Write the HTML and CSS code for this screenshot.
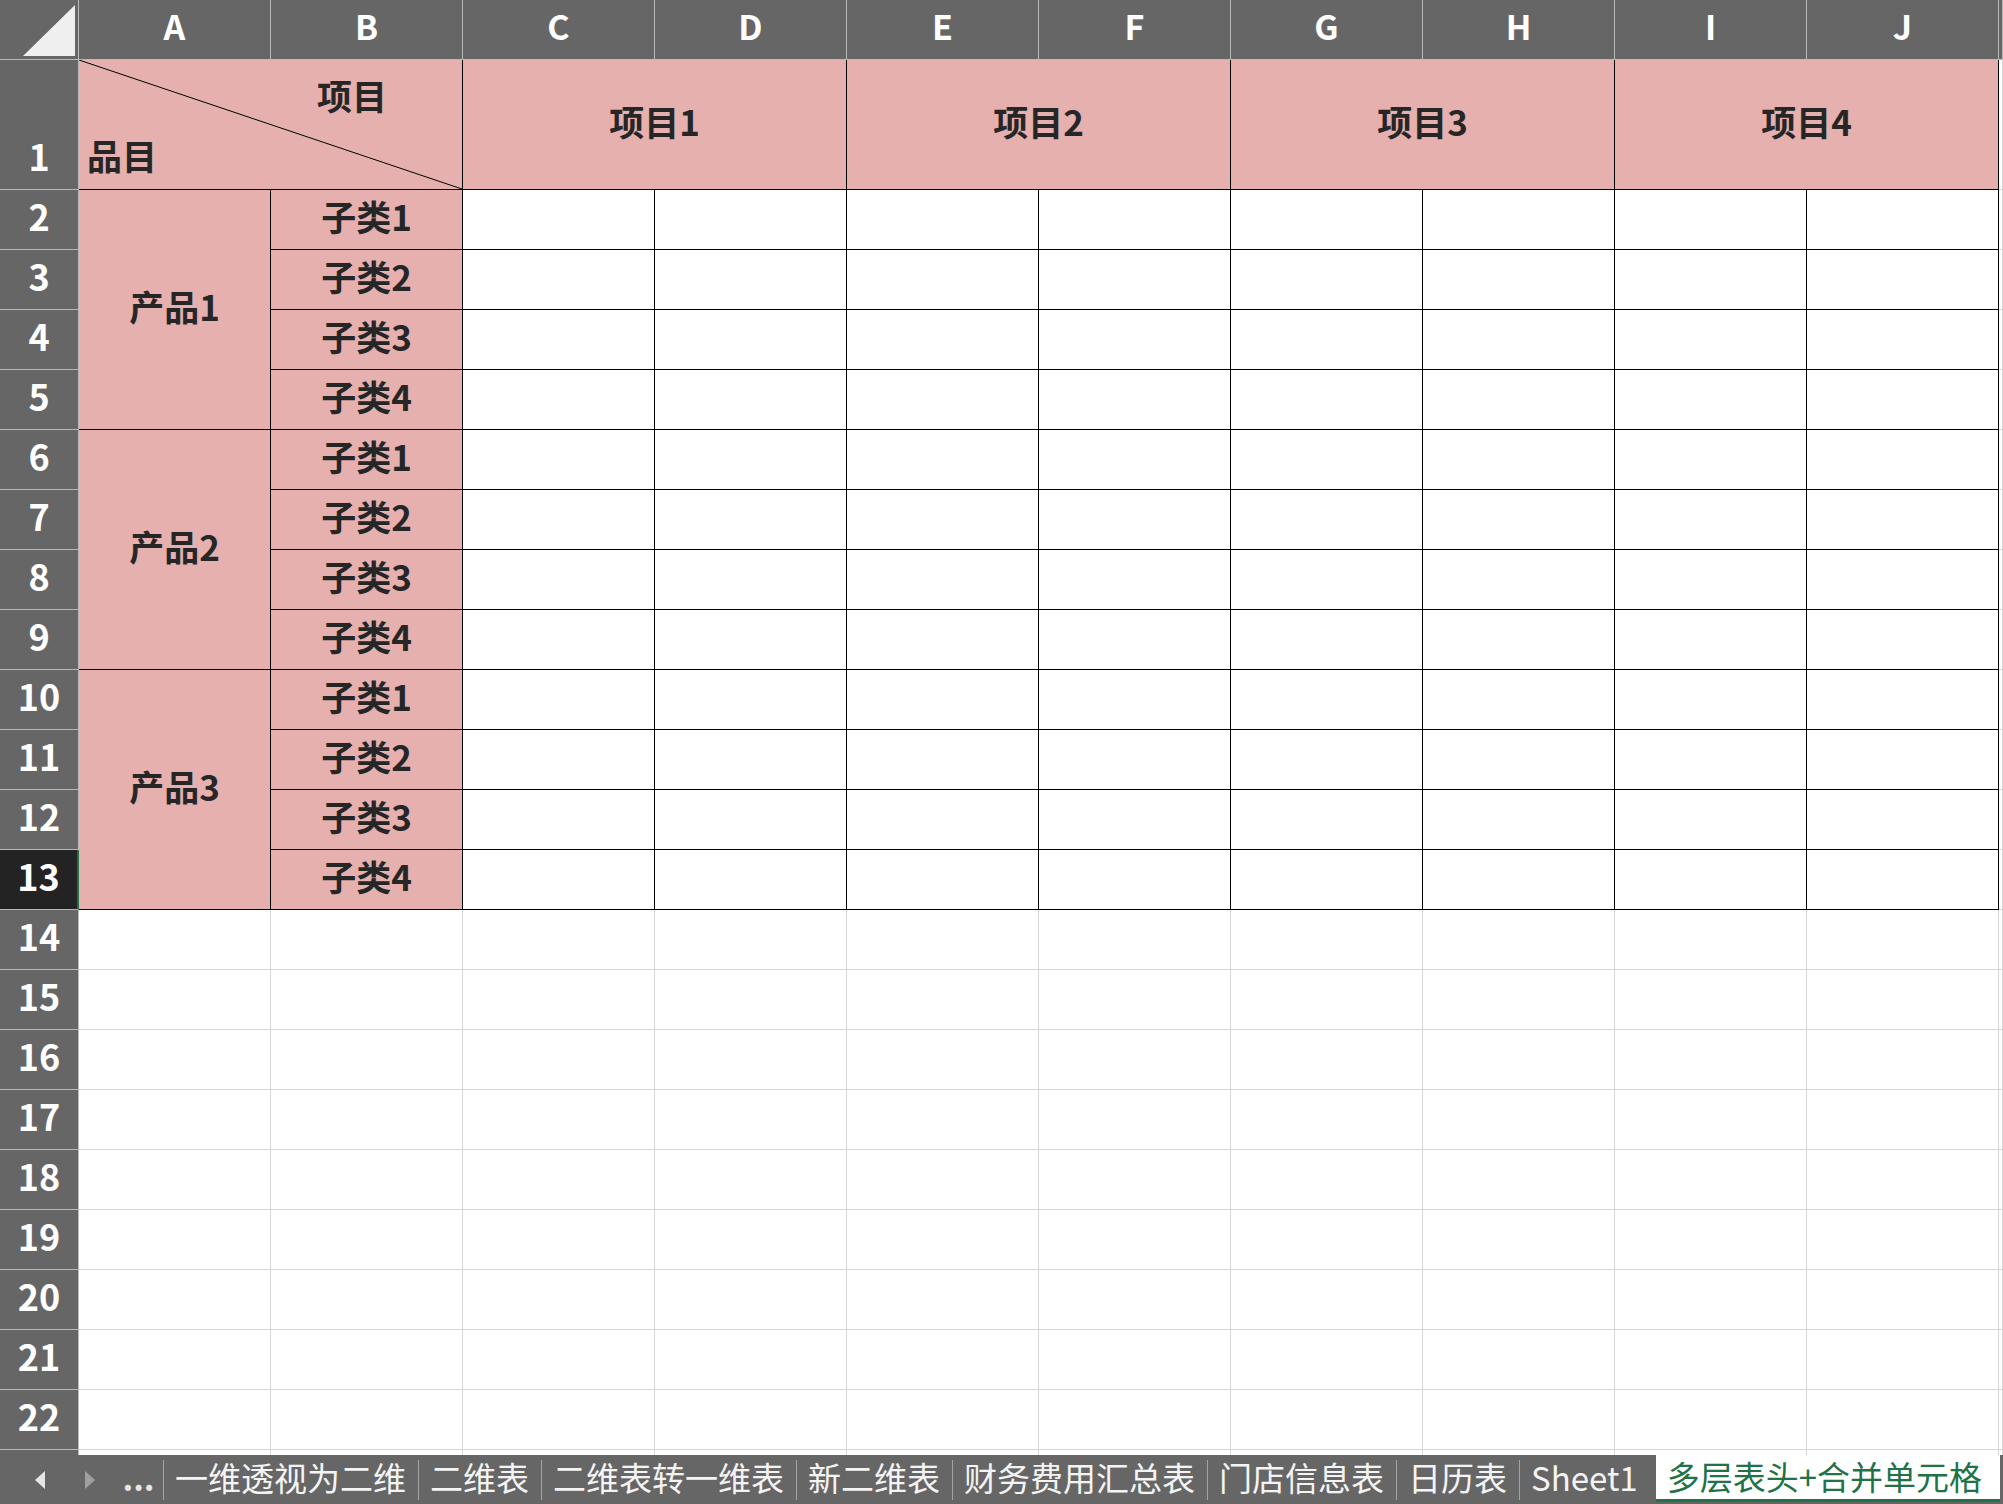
FILE: index.html
```html
<!DOCTYPE html>
<html lang="zh-CN">
<head>
    <meta charset="UTF-8">
    <title>多层表头+合并单元格</title>
    <link rel="stylesheet" href="styles.css">
</head>
<body>
    <!-- Sheet grid -->
    <div class="sheet">
        <!-- Column headers -->
        <div class="hd corner">
            <svg width="78" height="59" viewBox="0 0 78 59"><polygon points="23,56 75,5 75,56" fill="#efefef"/></svg>
        </div>
        <div class="hd">A</div><div class="hd">B</div><div class="hd">C</div><div class="hd">D</div><div class="hd">E</div>
        <div class="hd">F</div><div class="hd">G</div><div class="hd">H</div><div class="hd">I</div><div class="hd">J</div>
        <div class="hd"></div>

        <!-- Row 1: multi-level header -->
        <div class="rh">1</div>
        <div class="t p span2 diag">
            <svg class="slash" preserveAspectRatio="none"><line x1="0" y1="0" x2="100%" y2="100%"/></svg>
            <div class="diag-top">项目</div>
            <div class="diag-bottom">品目</div>
        </div>
        <div class="t p span2">项目1</div>
        <div class="t p span2">项目2</div>
        <div class="t p span2">项目3</div>
        <div class="t p span2">项目4</div>
        <div class="c"></div>

        <!-- 产品1 -->
        <div class="rh">2</div>
        <div class="t p span4">产品1</div>
        <div class="t p">子类1</div>
        <div class="t"></div><div class="t"></div><div class="t"></div><div class="t"></div><div class="t"></div><div class="t"></div><div class="t"></div><div class="t"></div>
        <div class="c"></div>
        <div class="rh">3</div>
        <div class="t p">子类2</div>
        <div class="t"></div><div class="t"></div><div class="t"></div><div class="t"></div><div class="t"></div><div class="t"></div><div class="t"></div><div class="t"></div>
        <div class="c"></div>
        <div class="rh">4</div>
        <div class="t p">子类3</div>
        <div class="t"></div><div class="t"></div><div class="t"></div><div class="t"></div><div class="t"></div><div class="t"></div><div class="t"></div><div class="t"></div>
        <div class="c"></div>
        <div class="rh">5</div>
        <div class="t p">子类4</div>
        <div class="t"></div><div class="t"></div><div class="t"></div><div class="t"></div><div class="t"></div><div class="t"></div><div class="t"></div><div class="t"></div>
        <div class="c"></div>

        <!-- 产品2 -->
        <div class="rh">6</div>
        <div class="t p span4">产品2</div>
        <div class="t p">子类1</div>
        <div class="t"></div><div class="t"></div><div class="t"></div><div class="t"></div><div class="t"></div><div class="t"></div><div class="t"></div><div class="t"></div>
        <div class="c"></div>
        <div class="rh">7</div>
        <div class="t p">子类2</div>
        <div class="t"></div><div class="t"></div><div class="t"></div><div class="t"></div><div class="t"></div><div class="t"></div><div class="t"></div><div class="t"></div>
        <div class="c"></div>
        <div class="rh">8</div>
        <div class="t p">子类3</div>
        <div class="t"></div><div class="t"></div><div class="t"></div><div class="t"></div><div class="t"></div><div class="t"></div><div class="t"></div><div class="t"></div>
        <div class="c"></div>
        <div class="rh">9</div>
        <div class="t p">子类4</div>
        <div class="t"></div><div class="t"></div><div class="t"></div><div class="t"></div><div class="t"></div><div class="t"></div><div class="t"></div><div class="t"></div>
        <div class="c"></div>

        <!-- 产品3 -->
        <div class="rh">10</div>
        <div class="t p span4">产品3</div>
        <div class="t p">子类1</div>
        <div class="t"></div><div class="t"></div><div class="t"></div><div class="t"></div><div class="t"></div><div class="t"></div><div class="t"></div><div class="t"></div>
        <div class="c"></div>
        <div class="rh">11</div>
        <div class="t p">子类2</div>
        <div class="t"></div><div class="t"></div><div class="t"></div><div class="t"></div><div class="t"></div><div class="t"></div><div class="t"></div><div class="t"></div>
        <div class="c"></div>
        <div class="rh">12</div>
        <div class="t p">子类3</div>
        <div class="t"></div><div class="t"></div><div class="t"></div><div class="t"></div><div class="t"></div><div class="t"></div><div class="t"></div><div class="t"></div>
        <div class="c"></div>
        <div class="rh selected">13</div>
        <div class="t p">子类4</div>
        <div class="t"></div><div class="t"></div><div class="t"></div><div class="t"></div><div class="t"></div><div class="t"></div><div class="t"></div><div class="t"></div>
        <div class="c"></div>

        <!-- Empty rows -->
        <div class="rh">14</div>
        <div class="c"></div><div class="c"></div><div class="c"></div><div class="c"></div><div class="c"></div><div class="c"></div><div class="c"></div><div class="c"></div><div class="c"></div><div class="c"></div><div class="c"></div>
        <div class="rh">15</div>
        <div class="c"></div><div class="c"></div><div class="c"></div><div class="c"></div><div class="c"></div><div class="c"></div><div class="c"></div><div class="c"></div><div class="c"></div><div class="c"></div><div class="c"></div>
        <div class="rh">16</div>
        <div class="c"></div><div class="c"></div><div class="c"></div><div class="c"></div><div class="c"></div><div class="c"></div><div class="c"></div><div class="c"></div><div class="c"></div><div class="c"></div><div class="c"></div>
        <div class="rh">17</div>
        <div class="c"></div><div class="c"></div><div class="c"></div><div class="c"></div><div class="c"></div><div class="c"></div><div class="c"></div><div class="c"></div><div class="c"></div><div class="c"></div><div class="c"></div>
        <div class="rh">18</div>
        <div class="c"></div><div class="c"></div><div class="c"></div><div class="c"></div><div class="c"></div><div class="c"></div><div class="c"></div><div class="c"></div><div class="c"></div><div class="c"></div><div class="c"></div>
        <div class="rh">19</div>
        <div class="c"></div><div class="c"></div><div class="c"></div><div class="c"></div><div class="c"></div><div class="c"></div><div class="c"></div><div class="c"></div><div class="c"></div><div class="c"></div><div class="c"></div>
        <div class="rh">20</div>
        <div class="c"></div><div class="c"></div><div class="c"></div><div class="c"></div><div class="c"></div><div class="c"></div><div class="c"></div><div class="c"></div><div class="c"></div><div class="c"></div><div class="c"></div>
        <div class="rh">21</div>
        <div class="c"></div><div class="c"></div><div class="c"></div><div class="c"></div><div class="c"></div><div class="c"></div><div class="c"></div><div class="c"></div><div class="c"></div><div class="c"></div><div class="c"></div>
        <div class="rh">22</div>
        <div class="c"></div><div class="c"></div><div class="c"></div><div class="c"></div><div class="c"></div><div class="c"></div><div class="c"></div><div class="c"></div><div class="c"></div><div class="c"></div><div class="c"></div>
        <div class="rh"></div>
        <div class="c"></div><div class="c"></div><div class="c"></div><div class="c"></div><div class="c"></div><div class="c"></div><div class="c"></div><div class="c"></div><div class="c"></div><div class="c"></div><div class="c"></div>
    </div>

    <!-- Sheet tabs -->
    <div class="tabs">
        <div class="nav">
            <span class="arrow-left"></span>
            <span class="arrow-right"></span>
        </div>
        <div class="more">...</div>
        <div class="tab">一维透视为二维</div>
        <div class="tab">二维表</div>
        <div class="tab">二维表转一维表</div>
        <div class="tab">新二维表</div>
        <div class="tab">财务费用汇总表</div>
        <div class="tab">门店信息表</div>
        <div class="tab">日历表</div>
        <div class="tab">Sheet1</div>
        <div class="tab active">多层表头+合并单元格</div>
    </div>
</body>
</html>
```

FILE: styles.css
```css
* {
    margin: 0;
    padding: 0;
    box-sizing: border-box;
}

body {
    width: 2003px;
    height: 1504px;
    overflow: hidden;
    background: #ffffff;
    font-family: "Noto Sans CJK SC", "Noto Sans", sans-serif;
}

/* Sheet grid */
.sheet {
    height: 1455px;
    overflow: hidden;
    display: grid;
    grid-template-columns: 79px repeat(10, 192px) 1fr;
    grid-template-rows: 60px 130px repeat(22, 60px);
}

.hd {
    background: #666666;
    color: #ffffff;
    font-size: 34px;
    font-weight: 700;
    padding-bottom: 8px;
    display: flex;
    align-items: center;
    justify-content: center;
    border-right: 1px solid #b9b9b9;
    border-bottom: 1px solid #b9b9b9;
}

.corner {
    padding-bottom: 0;
    align-items: flex-start;
    justify-content: flex-start;
}

.rh {
    background: #666666;
    color: #ffffff;
    font-size: 36px;
    font-weight: 700;
    line-height: 58px;
    padding-bottom: 5px;
    display: flex;
    align-items: flex-end;
    justify-content: center;
    border-right: 1px solid #b9b9b9;
    border-bottom: 1px solid #b9b9b9;
}

.rh.selected {
    background: #232323;
    border-right: 2px solid #217346;
}

.c {
    border-right: 1px solid #d6d6d6;
    border-bottom: 1px solid #d6d6d6;
}

.t {
    border-right: 1px solid #000000;
    border-bottom: 1px solid #000000;
    padding-bottom: 8px;
    display: flex;
    align-items: center;
    justify-content: center;
    color: #262626;
    font-size: 35px;
    font-weight: 700;
}

.p {
    background: #e6b0af;
}

.span2 {
    grid-column: span 2;
}

.span4 {
    grid-row: span 4;
}

/* Diagonal header cell */
.diag {
    display: block;
    position: relative;
    padding-top: 5px;
    padding-bottom: 0;
    line-height: 60px;
}

.slash {
    position: absolute;
    top: 0;
    left: 0;
    width: 100%;
    height: 100%;
}

.slash line {
    stroke: #000000;
    stroke-width: 1;
}

.diag-top {
    text-align: right;
    padding-right: 75px;
}

.diag-bottom {
    padding-left: 8px;
}

/* Sheet tabs */
.tabs {
    height: 49px;
    background: #666666;
    display: flex;
    align-items: center;
    padding-right: 3px;
    color: #f4f4f4;
    font-size: 33px;
    line-height: 1;
    white-space: nowrap;
}

.nav {
    width: 122px;
    display: flex;
    align-items: center;
    gap: 40px;
    padding-left: 35px;
}

.arrow-left {
    width: 0;
    height: 0;
    border-top: 9px solid transparent;
    border-bottom: 9px solid transparent;
    border-right: 10px solid #e6e6e6;
}

.arrow-right {
    width: 0;
    height: 0;
    border-top: 9px solid transparent;
    border-bottom: 9px solid transparent;
    border-left: 10px solid #a0a0a0;
}

.more {
    width: 41px;
    padding-right: 8px;
    padding-bottom: 4px;
    text-align: center;
    font-weight: 700;
    color: #e6e6e6;
}

.tab {
    height: 40px;
    display: flex;
    align-items: center;
    border-left: 1px solid #a3a3a3;
    padding: 0 12px 4px 11px;
}

.tab.active {
    flex: 1;
    align-self: stretch;
    height: auto;
    margin-left: 6px;
    margin-bottom: 2px;
    border-left: none;
    background: #ffffff;
    color: #217346;
    border-bottom: 3px solid #217346;
    padding: 0 8px 2px 11px;
}
```
